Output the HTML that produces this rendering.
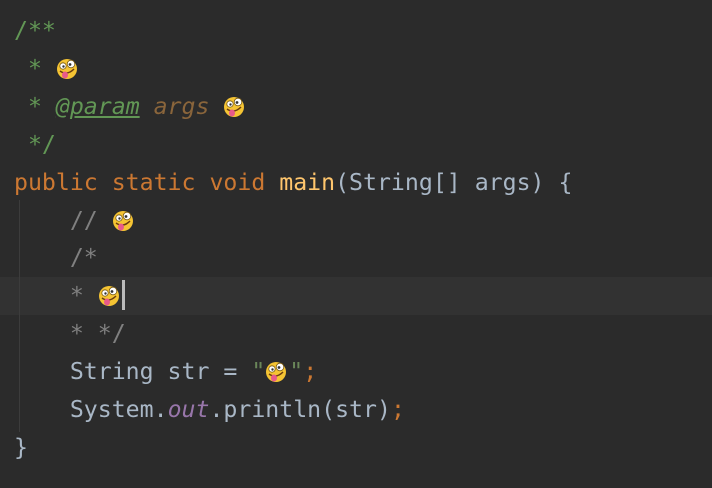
<html><head><style>
body{margin:0;background:#2b2b2b;width:712px;height:488px;overflow:hidden;position:relative}
.code{position:absolute;left:14px;top:12px;font-family:"DejaVu Sans Mono","Liberation Mono",monospace;font-size:23.2px;line-height:37.9px;color:#a9b7c6;white-space:pre}
.hl{position:absolute;left:0;right:0;top:277px;height:38px;background:#323232}
.guide{position:absolute;left:19px;top:200px;width:1px;height:232px;background:#3c3c3c}
.g{color:#629755}.k{color:#cc7832}.f{color:#ffc66d}.c{color:#808080}.s{color:#6a8759}
.a{color:#8a653b;font-style:italic}.o{color:#9876aa;font-style:italic}
.t{text-decoration:underline;font-style:italic}
.e{display:inline-block;width:22px;height:22px;vertical-align:-4px;margin-right:2px}
.cur{display:inline-block;width:3px;height:30px;background:#bbb;vertical-align:-7px}
</style></head><body>
<div class="hl"></div><div class="guide"></div>
<svg width="0" height="0" style="position:absolute"><defs><g id="em"><circle cx="11" cy="11" r="10" fill="#f5c433"/><circle cx="7" cy="8" r="3.2" fill="#fff" stroke="#7a5a10" stroke-width="0.8"/><circle cx="15" cy="6" r="3.8" fill="#fff" stroke="#7a5a10" stroke-width="0.8"/><circle cx="7.5" cy="8.5" r="1.2" fill="#333"/><circle cx="14" cy="6.5" r="1.4" fill="#333"/><path d="M4 13 Q11 18 18 11" stroke="#6a3c10" stroke-width="1.5" fill="none"/><ellipse cx="9" cy="17" rx="3" ry="3.5" fill="#e85a8a"/></g></defs></svg>
<div class="code"><span class="g">/**</span>
<span class="g"> * </span><svg class="e"><use href="#em"/></svg>
<span class="g"> * <span class="t">@param</span> </span><span class="a">args</span> <svg class="e"><use href="#em"/></svg>
<span class="g"> */</span>
<span class="k">public static void </span><span class="f">main</span>(String[] args) {
    <span class="c">// </span><svg class="e"><use href="#em"/></svg>
    <span class="c">/*</span>
    <span class="c">* </span><svg class="e"><use href="#em"/></svg><span class="cur"></span>
    <span class="c">* */</span>
    String str = <span class="s">"</span><svg class="e"><use href="#em"/></svg><span class="s">"</span><span class="k">;</span>
    System.<span class="o">out</span>.println(str)<span class="k">;</span>
}</div>
</body></html>
